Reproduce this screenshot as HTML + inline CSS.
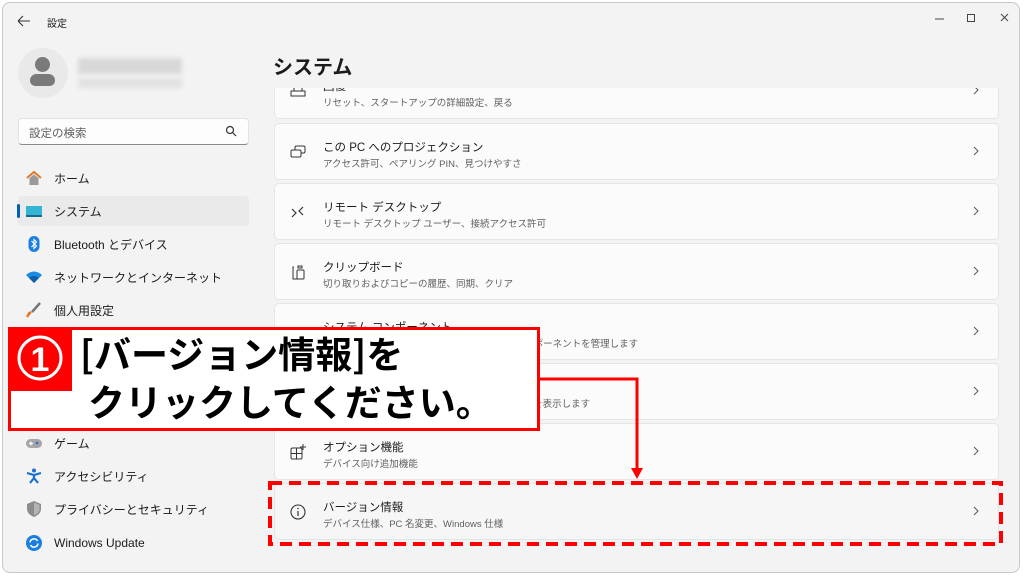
<!DOCTYPE html>
<html><head><meta charset="utf-8"><style>
*{margin:0;padding:0;box-sizing:border-box}
body{width:1024px;height:576px;background:#fff;font-family:"Liberation Sans","Noto Sans CJK JP",sans-serif;position:relative;overflow:hidden;color:#1b1b1b}
.win{position:absolute;left:2px;top:2px;width:1018px;height:571px;background:#f3f3f3;border:1px solid #c8c8c8;border-radius:8px;overflow:hidden}
.a{position:absolute}
.nav{position:absolute;left:15px;width:231px;height:30px;font-size:12px;display:flex;align-items:center}
.nav .ic{width:16px;height:16px;margin-left:8px;margin-right:12px}
.card{position:absolute;left:274px;width:725px;height:57px;background:#fbfbfb;border:1px solid #e5e5e5;border-radius:5px}
.card .t{position:absolute;left:48px;top:15px;font-size:11.5px;color:#1b1b1b}
.card .s{position:absolute;left:48px;top:32px;font-size:9.5px;color:#606060}
.card .ch{position:absolute;right:16px;top:21px;width:12px;height:12px}
.card .ci{position:absolute;left:14px;top:19px;width:18px;height:18px}
</style></head><body>
<div class="win">
<svg class="a" style="left:14px;top:12px" width="14" height="12"><path d="M1 6H13M1 6L6 1M1 6L6 11" stroke="#333" stroke-width="1.1" fill="none"/></svg>
<div class="a" style="left:44px;top:12px;font-size:10px">設定</div>
<svg class="a" style="left:930px;top:8px" width="80" height="16"><path d="M2 8H11" stroke="#444"/><path d="M34.5 3.5h7v7h-7z" stroke="#444" fill="none"/><path d="M68 3L75 10M75 3L68 10" stroke="#444"/></svg>
<div class="a" style="left:15px;top:45px;width:50px;height:50px;border-radius:50%;background:#e9e9e9"></div>
<div class="a" style="left:32px;top:54px;width:15px;height:15px;border-radius:50%;background:#7a7a7a"></div>
<div class="a" style="left:27px;top:71px;width:25px;height:12px;border-radius:7px 7px 6px 6px;background:#7a7a7a"></div>
<div class="a" style="left:75px;top:55px;width:104px;height:16px;background:#d8d8d8;filter:blur(2px)"></div>
<div class="a" style="left:75px;top:75px;width:104px;height:10px;background:#e2e2e2;filter:blur(2px)"></div>
<div class="a" style="left:15px;top:115px;width:231px;height:27px;background:#fdfdfd;border:1px solid #e3e3e3;border-bottom:1px solid #8a8a8a;border-radius:4px;font-size:11.5px;color:#5f5f5f;padding:6px 0 0 10px">設定の検索</div>
<svg class="a" style="left:222px;top:122px" width="12" height="12"><circle cx="5" cy="5" r="3.5" stroke="#333" fill="none" stroke-width="1.2"/><path d="M7.5 7.5L11 11" stroke="#333" stroke-width="1.2"/></svg>
<div class="nav" style="top:160px"><svg class="ic" viewBox="0 0 16 16"><path d="M1 8L8 2L15 8" stroke="#e07a2a" stroke-width="2" fill="none"/><path d="M3.5 8V15H12.5V8L8 4.5Z" fill="#9a9a9a"/></svg>ホーム</div>
<div class="nav" style="top:193px;background:#eaeaea;border-radius:4px"><div class="a" style="left:-1px;top:8px;width:3px;height:14px;background:#005fb8;border-radius:2px"></div><svg class="ic" viewBox="0 0 16 16"><rect x="0" y="3" width="16" height="11" fill="#35b5d6"/><rect x="0" y="12" width="16" height="2" fill="#16698a"/></svg>システム</div>
<div class="nav" style="top:226px"><svg class="ic" viewBox="0 0 16 16"><rect x="2.5" y="0" width="11" height="16" rx="5.5" fill="#1a7fe0"/><path d="M5.5 5L10.5 10L8 12.5V3.5L10.5 6L5.5 11" stroke="#fff" fill="none" stroke-width="1.1"/></svg>Bluetooth とデバイス</div>
<div class="nav" style="top:259px"><svg class="ic" viewBox="0 0 16 16"><path d="M0 6Q8 -1 16 6L8 14Z" fill="#1a8be0"/><path d="M3 9Q8 5 13 9L8 14Z" fill="#0f5fa8"/></svg>ネットワークとインターネット</div>
<div class="nav" style="top:292px"><svg class="ic" viewBox="0 0 16 16"><path d="M14 1L6 10" stroke="#777" stroke-width="2.5"/><path d="M5 10L1 15L3 11Z" fill="#e07a2a" stroke="#e07a2a" stroke-width="2"/></svg>個人用設定</div>
<div class="nav" style="top:392px"><svg class="ic" viewBox="0 0 16 16"><circle cx="8" cy="8" r="7" fill="#a7d3ea"/></svg><span style="color:#9a9a9a">時刻と言語</span></div>
<div class="nav" style="top:425px"><svg class="ic" viewBox="0 0 16 16"><rect x="0" y="4" width="16" height="9" rx="4.5" fill="#a6a6a6"/><circle cx="11" cy="8" r="1.3" fill="#2e6bd8"/><path d="M3 8.5h4M5 6.5v4" stroke="#fff" stroke-width="1.2"/></svg>ゲーム</div>
<div class="nav" style="top:458px"><svg class="ic" viewBox="0 0 16 16"><circle cx="8" cy="2.5" r="2" fill="#1a6fd0"/><path d="M1 5L8 7L15 5M8 7V10L4 15M8 10L12 15" stroke="#1a6fd0" stroke-width="2.2" fill="none"/></svg>アクセシビリティ</div>
<div class="nav" style="top:491px"><svg class="ic" viewBox="0 0 16 16"><path d="M8 0L15 3V8Q15 13 8 16Q1 13 1 8V3Z" fill="#8c8c8c"/><path d="M8 1.5L13.5 4V8Q13.5 12 8 14.5Z" fill="#b4b4b4"/></svg>プライバシーとセキュリティ</div>
<div class="nav" style="top:525px"><svg class="ic" viewBox="0 0 16 16"><circle cx="8" cy="8" r="8" fill="#1a7fe0"/><path d="M4 7.5A4 4 0 0 1 11.5 6M12 8.5A4 4 0 0 1 4.5 10" stroke="#fff" stroke-width="1.5" fill="none"/></svg>Windows Update</div>
<div class="a" style="left:270px;top:48px;font-size:20px;font-weight:600">システム</div>
</div>
<div style="position:absolute;left:0;top:88px;width:1024px;height:480px;overflow:hidden">
<div style="position:absolute;top:-88px;left:0;width:1024px;height:576px">
<div class="card" style="top:62px"><div class="t">回復</div><div class="s">リセット、スタートアップの詳細設定、戻る</div><svg class="ci" viewBox="0 0 18 18"><path d="M2 9h14v5H2z" stroke="#333" fill="none"/><path d="M5 9V6M13 9V6" stroke="#333"/></svg><svg class="ch" viewBox="0 0 12 12"><path d="M4 2L8 6L4 10" stroke="#555" fill="none"/></svg></div>
</div></div>
<div class="card" style="top:123px"><div class="t">この PC へのプロジェクション</div><div class="s">アクセス許可、ペアリング PIN、見つけやすさ</div><svg class="ci" viewBox="0 0 18 18"><rect x="6" y="3" width="10" height="7" rx="1.5" stroke="#333" fill="none"/><rect x="2" y="7" width="10" height="7" rx="1.5" stroke="#333" fill="#fbfbfb"/></svg><svg class="ch" viewBox="0 0 12 12"><path d="M4 2L8 6L4 10" stroke="#555" fill="none"/></svg></div>
<div class="card" style="top:183px"><div class="t">リモート デスクトップ</div><div class="s">リモート デスクトップ ユーザー、接続アクセス許可</div><svg class="ci" viewBox="0 0 18 18"><path d="M3 6L7 10L3 14M14 4L10 8L14 12" stroke="#333" fill="none" stroke-width="1.2"/></svg><svg class="ch" viewBox="0 0 12 12"><path d="M4 2L8 6L4 10" stroke="#555" fill="none"/></svg></div>
<div class="card" style="top:243px"><div class="t">クリップボード</div><div class="s">切り取りおよびコピーの履歴、同期、クリア</div><svg class="ci" viewBox="0 0 18 18"><path d="M5 4H4V16H9M9 3h4v2H9z" stroke="#333" fill="none"/><rect x="8" y="7" width="7" height="9" rx="1" stroke="#333" fill="none"/></svg><svg class="ch" viewBox="0 0 12 12"><path d="M4 2L8 6L4 10" stroke="#555" fill="none"/></svg></div>
<div class="card" style="top:303px"><div class="t">システム コンポーネント</div><div class="s">デバイスにインストールされているシステム コンポーネントを管理します</div><svg class="ch" viewBox="0 0 12 12"><path d="M4 2L8 6L4 10" stroke="#555" fill="none"/></svg></div>
<div class="card" style="top:363px"><div class="t">AI コンポーネント</div><div class="s">PC にインストールされている AI コンポーネントを表示します</div><svg class="ch" viewBox="0 0 12 12"><path d="M4 2L8 6L4 10" stroke="#555" fill="none"/></svg></div>
<div class="card" style="top:423px"><div class="t">オプション機能</div><div class="s">デバイス向け追加機能</div><svg class="ci" viewBox="0 0 18 18"><rect x="2" y="5" width="11" height="11" rx="1.5" stroke="#333" fill="none"/><path d="M7.5 5V16M2 10.5H13M14 1V7M11 4H17" stroke="#333"/></svg><svg class="ch" viewBox="0 0 12 12"><path d="M4 2L8 6L4 10" stroke="#555" fill="none"/></svg></div>
<div class="card" style="top:483px;background:#f6f6f6"><div class="t">バージョン情報</div><div class="s">デバイス仕様、PC 名変更、Windows 仕様</div><svg class="ci" viewBox="0 0 18 18"><circle cx="9" cy="9" r="7" stroke="#333" fill="none" stroke-width="1.1"/><path d="M9 8V13" stroke="#333" stroke-width="1.2"/><circle cx="9" cy="5.5" r=".8" fill="#333"/></svg><svg class="ch" viewBox="0 0 12 12"><path d="M4 2L8 6L4 10" stroke="#555" fill="none"/></svg></div>
<svg class="a" style="left:0;top:0" width="1024" height="576">
<rect x="270" y="483" width="731" height="61" fill="none" stroke="#f00" stroke-width="4" stroke-dasharray="12,7"/>
<path d="M540 379H637V470" stroke="#f00" stroke-width="3" fill="none"/>
<path d="M631 468L637 479L643 468Z" fill="#f00"/>
</svg>
<div class="a" style="left:8px;top:327px;width:532px;height:104px;background:#fff;border:3px solid #f00"></div>
<div class="a" style="left:8px;top:327px;width:64px;height:64px;background:#f00"></div>
<svg class="a" style="left:8px;top:327px" width="64" height="64"><circle cx="32" cy="31" r="21" stroke="#fff" stroke-width="3" fill="none"/><text x="32" y="44" text-anchor="middle" font-size="34" font-weight="bold" fill="#fff" font-family="Liberation Sans, sans-serif">1</text></svg>
<div class="a" style="left:80px;top:328px;font-size:37px;line-height:48px;font-weight:bold;color:#000;font-family:'Noto Sans CJK JP',sans-serif;white-space:nowrap">[バージョン情報]を<br><span style="padding-left:8px">クリックしてください。</span></div>
</body></html>
